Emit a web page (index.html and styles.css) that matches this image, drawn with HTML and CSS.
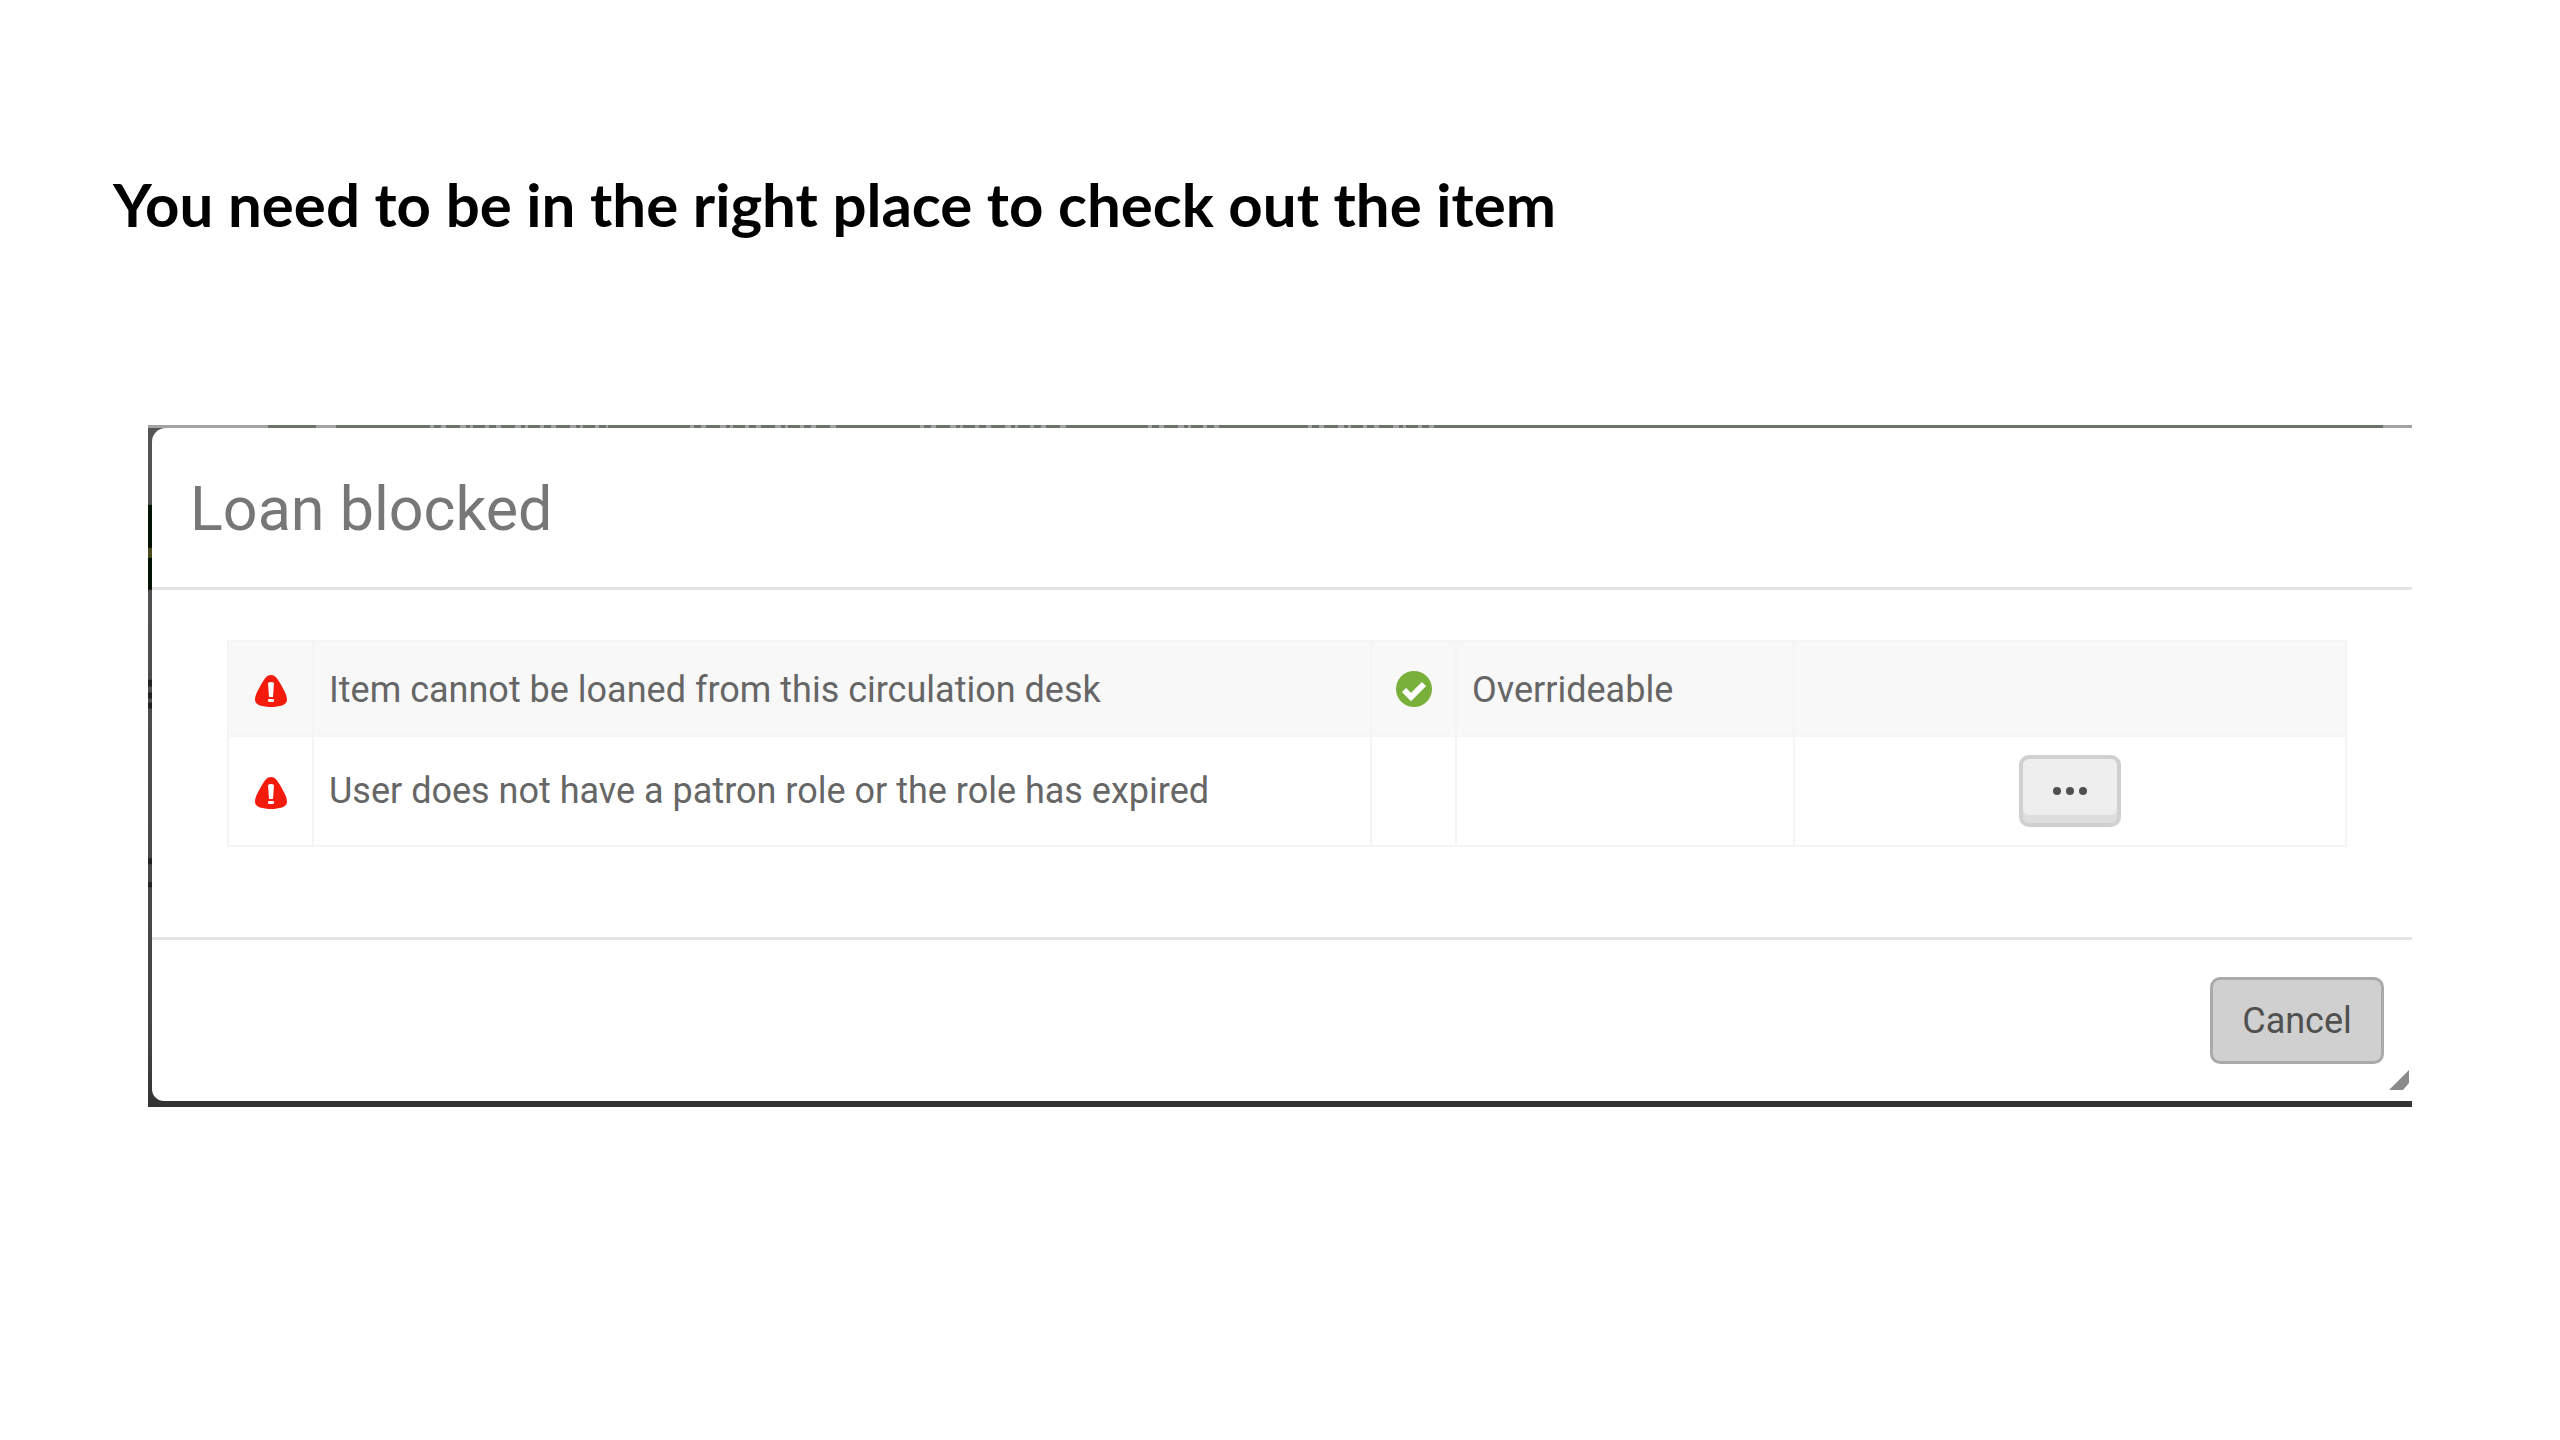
FILE: index.html
```html
<!DOCTYPE html>
<html lang="en">
<head>
<meta charset="utf-8">
<title>Loan blocked</title>
<link rel="stylesheet" href="styles.css">
</head>
<body>
<main class="slide">
  <h1 class="slide-title">You need to be in the right place to check out the item</h1>
  <section class="frame" aria-labelledby="dialog-title">
    <svg class="backdrop-top" viewBox="0 0 2264 3" preserveAspectRatio="none" aria-hidden="true">
      <path d="M0 1.5H2264" stroke="#a0a3a0" stroke-width="3"/>
      <path d="M120 1.5H168M188 1.5H270M460 1.5H530M692 1.5H760M922 1.5H988M1084 1.5H1148M1300 1.5H2235" stroke="#69736a" stroke-width="3"/>
      <path d="M270 1.5H460M530 1.5H692M760 1.5H922M988 1.5H1084M1148 1.5H1300" stroke="#69736a" stroke-width="3" stroke-dasharray="12 4 7 5 14 6 4 3"/>
    </svg>
    <svg class="backdrop-left" viewBox="0 0 4 683" preserveAspectRatio="none" aria-hidden="true">
      <path d="M2 80V165" stroke="#041204" stroke-width="4"/>
      <path d="M2 123V133" stroke="#4a4a20" stroke-width="4"/>
      <path d="M2 255V262M2 268V274M2 278V284M2 434V440M2 458V463" stroke="#222" stroke-width="4"/>
    </svg>
    <div class="dialog">
      <header class="dialog-head"><h2 class="dialog-title" id="dialog-title">Loan blocked</h2></header>
      <div class="dialog-body">
        <table class="blocks">
          <colgroup><col class="c-icon"><col class="c-message"><col class="c-check"><col class="c-status"><col class="c-action"></colgroup>
          <tbody>
            <tr>
              <td class="icon-cell"><svg class="warn" viewBox="0 0 32 34" role="img" aria-label="Error"><path d="M16 1C20 1 22 4 25 9C29 16 32 21 32 26C32 31 24 33 16 33S0 31 0 26C0 21 3 16 7 9C10 4 12 1 16 1Z" fill="#f41b0c"/><path d="M13 9Q16 7 19 9L18 23H14Z" fill="#fff"/><rect x="13" y="25" width="6" height="3" rx="1" fill="#fff"/></svg></td>
              <td>Item cannot be loaned from this circulation desk</td>
              <td class="icon-cell"><svg class="check" viewBox="0 0 36 36" role="img" aria-label="Yes"><circle cx="18" cy="18" r="18" fill="#78b03a"/><path d="M8 19L15 26L28 13" fill="none" stroke="#fff" stroke-width="6"/></svg></td>
              <td>Overrideable</td>
              <td></td>
            </tr>
            <tr>
              <td class="icon-cell"><svg class="warn" viewBox="0 0 32 34" role="img" aria-label="Error"><path d="M16 1C20 1 22 4 25 9C29 16 32 21 32 26C32 31 24 33 16 33S0 31 0 26C0 21 3 16 7 9C10 4 12 1 16 1Z" fill="#f41b0c"/><path d="M13 9Q16 7 19 9L18 23H14Z" fill="#fff"/><rect x="13" y="25" width="6" height="3" rx="1" fill="#fff"/></svg></td>
              <td>User does not have a patron role or the role has expired</td>
              <td></td>
              <td></td>
              <td class="action-cell"><button class="more" type="button" aria-label="More actions"><svg class="dots" viewBox="0 0 36 10" aria-hidden="true"><circle cx="5" cy="5" r="4"/><circle cx="18" cy="5" r="4"/><circle cx="31" cy="5" r="4"/></svg></button></td>
            </tr>
          </tbody>
        </table>
      </div>
      <footer class="dialog-foot">
        <button class="cancel" type="button">Cancel</button>
        <svg class="grip" viewBox="0 0 20 20" aria-hidden="true"><path d="M20 0V13L14 20H0Z" fill="#8a8a8a"/></svg>
      </footer>
    </div>
  </section>
</main>
</body>
</html>
```
FILE: styles.css
```css
* { box-sizing: border-box; }
body { margin: 0; background: #fff; font-family: Roboto, sans-serif; color: #666; }
.slide { padding: 164px 148px; }
.slide-title { margin: 0 0 181px -35px; font: 700 60px/80px Lato, sans-serif; color: #000; }
.frame { position: relative; padding: 3px 0 6px 4px; background: linear-gradient(#555, #444 90%, #333); }
.backdrop-top { position: absolute; top: 0; left: 0; width: 100%; height: 3px; }
.backdrop-left { position: absolute; top: 0; left: 0; width: 4px; height: 100%; }
.dialog { background: #fff; border-radius: 14px 0 0 12px; }
.dialog-head { padding: 43px 38px 40px; border-bottom: 3px solid #e4e4e4; }
.dialog-title { margin: 0; font-size: 61px; line-height: 76px; font-weight: 400; color: #777; }
.dialog-body { padding: 50px 65px 90px 75px; border-bottom: 3px solid #e4e4e4; }
.blocks { width: 100%; table-layout: fixed; border-collapse: collapse; font-size: 36px; line-height: 44px; }
.blocks td { height: 110px; padding: 0 15px; border: 2px solid #f5f5f5; }
.blocks tr:first-child td { height: 95px; padding-top: 3px; background: #f8f8f8; }
.c-icon, .c-check { width: 85px; }
.c-message { width: 1058px; }
.c-status { width: 338px; }
.blocks .icon-cell { padding: 0; text-align: center; }
.blocks tr:first-child .icon-cell { padding: 0; }
.warn { display: block; width: 32px; height: 34px; margin: 4px auto 0; }
.check { display: block; width: 36px; height: 36px; margin: 0 auto; }
.action-cell { text-align: center; }
.more { display: inline-flex; align-items: center; justify-content: center; width: 102px; height: 72px; padding: 0; border: 4px solid #d0d0d0; border-radius: 10px; background: #eee; box-shadow: inset 0 -8px #ddd; vertical-align: middle; }
.dots { width: 36px; height: 10px; fill: #505050; }
.dialog-foot { position: relative; display: flex; justify-content: flex-end; padding: 37px 28px; }
.cancel { width: 174px; height: 87px; padding: 0; border: 3px solid #aaa; border-radius: 10px; background: #d0d0d0; color: #505050; font: 400 36px/44px Roboto, sans-serif; }
.grip { position: absolute; right: 3px; bottom: 11px; width: 20px; height: 20px; }
```
